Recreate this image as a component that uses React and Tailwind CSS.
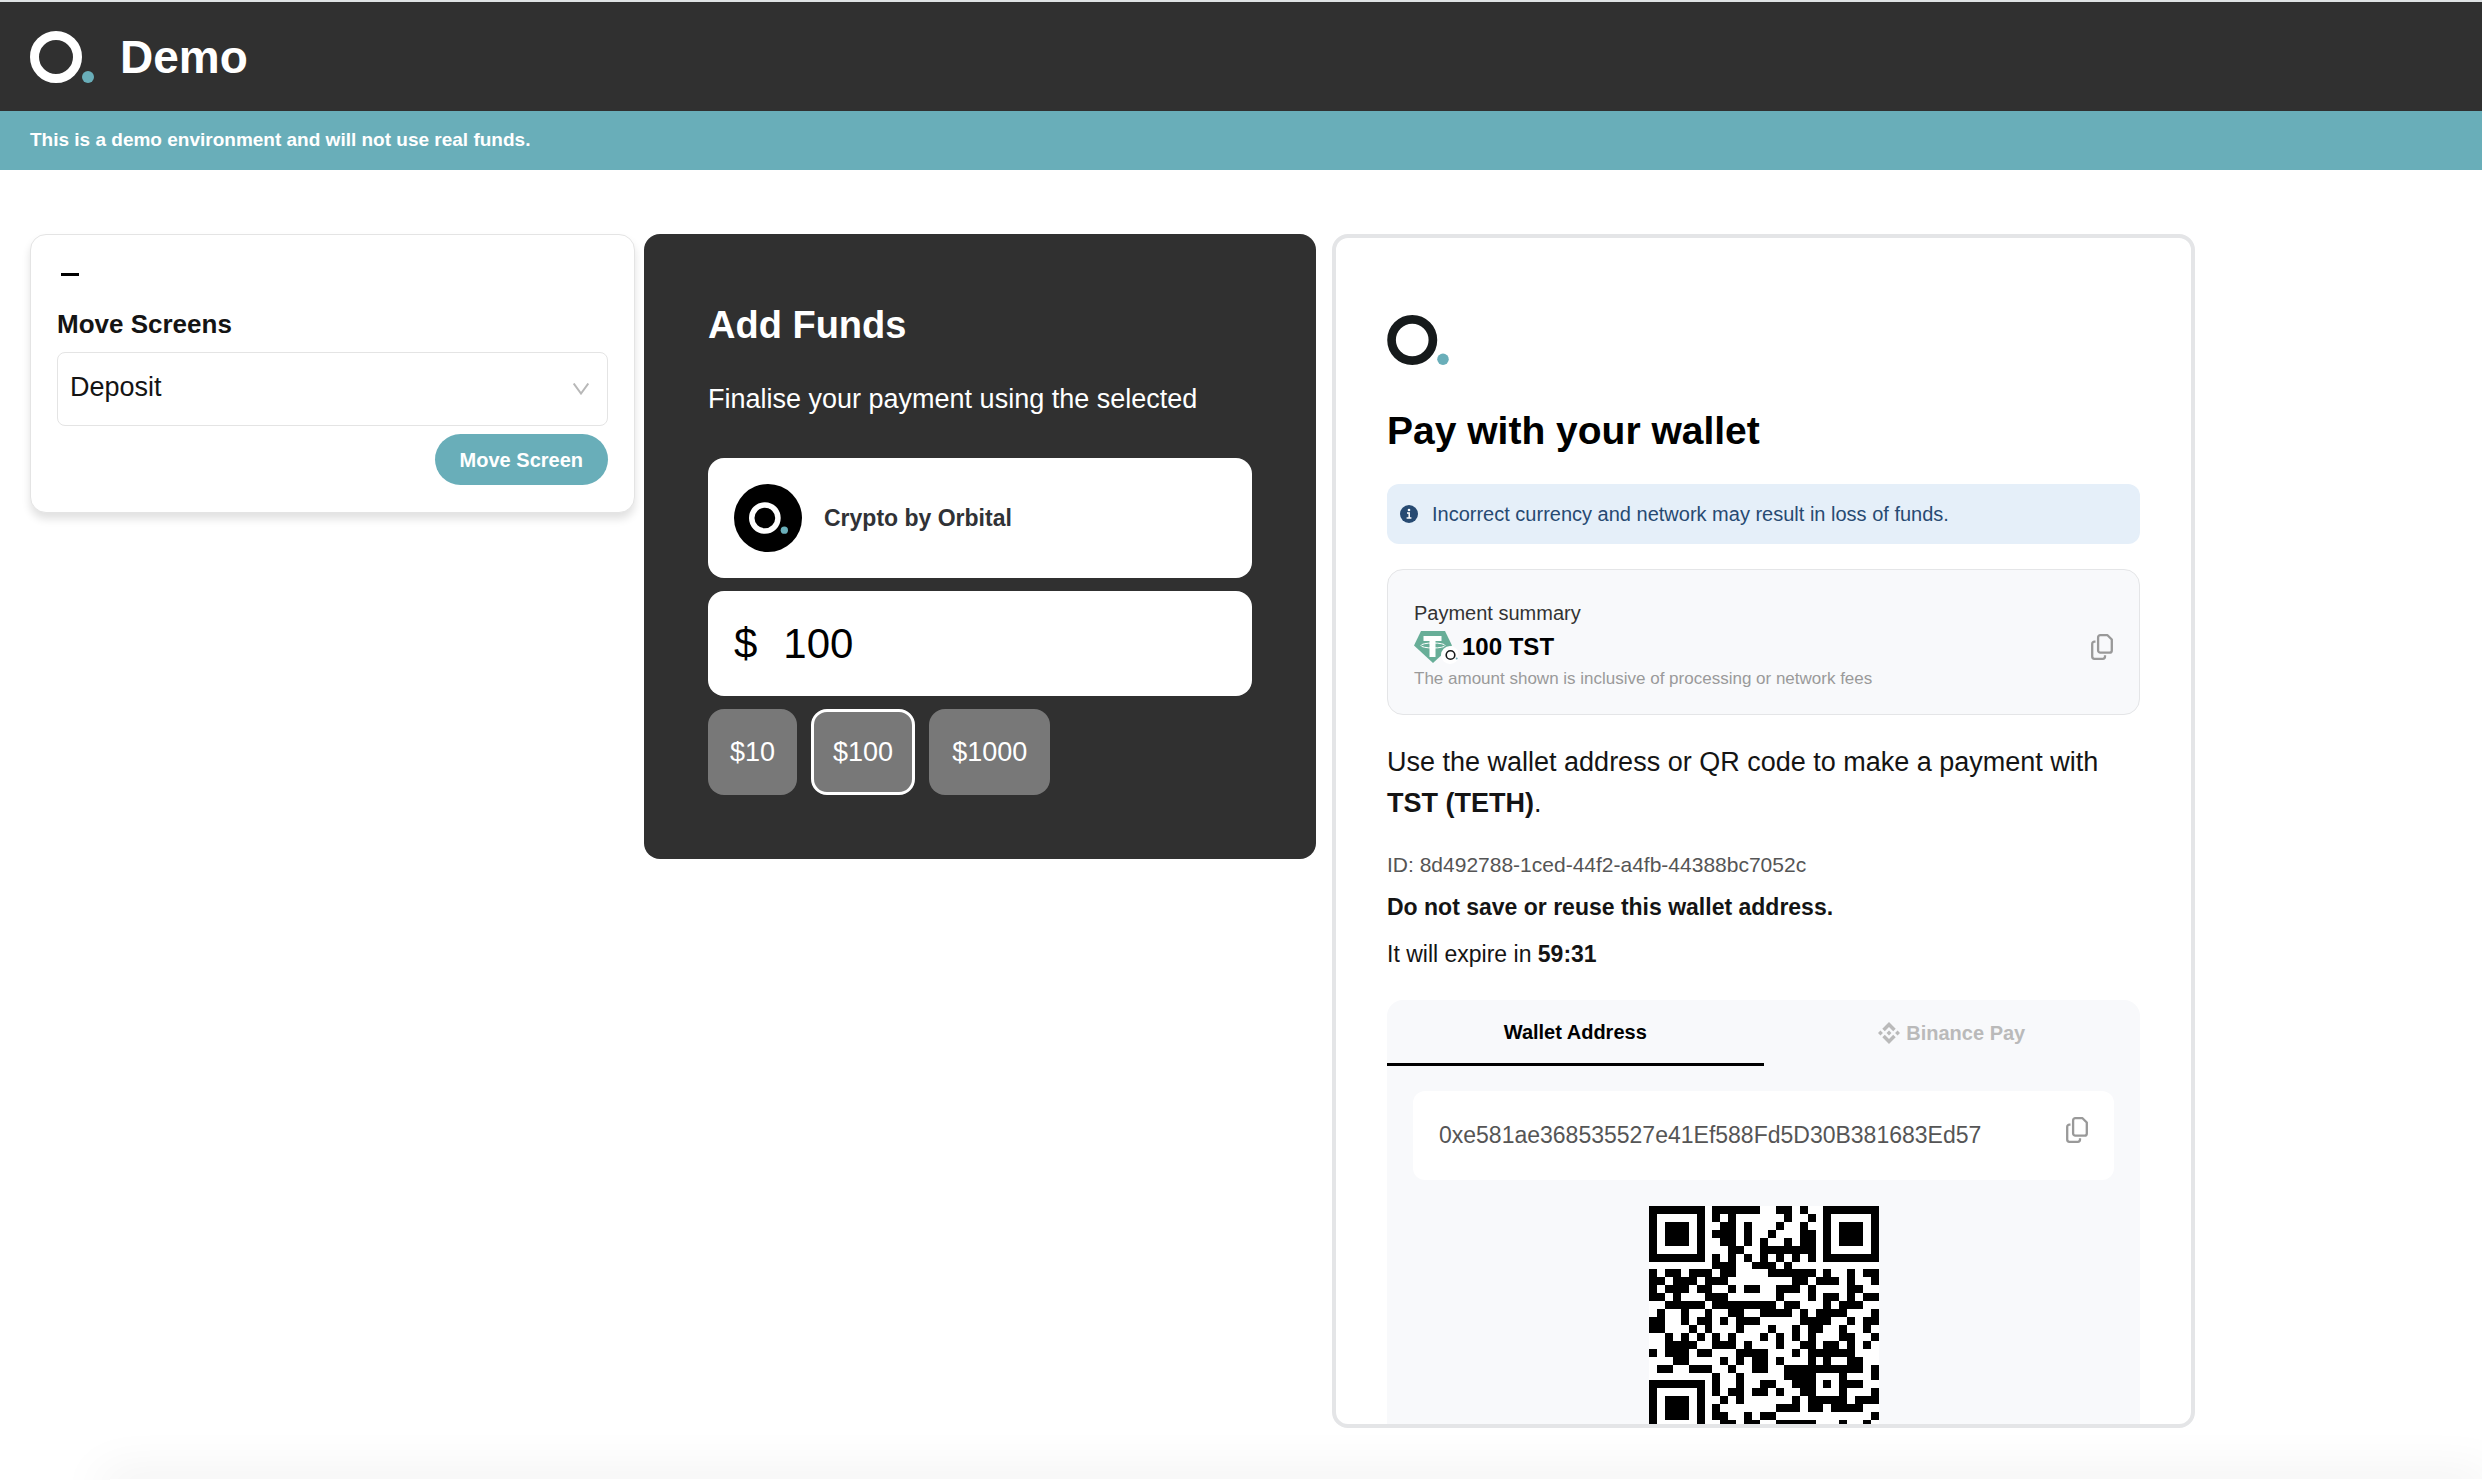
import React, { useState } from "react";

const QR_ROWS = [
  "11111110111111001101001111111",
  "10000010101000000100101000001",
  "10111010011010001001001011101",
  "10111010111010010001101011101",
  "10111010011010100101101011101",
  "10000010001100111111101000001",
  "11111110101010101010101111111",
  "00000000111001110100000000000",
  "10110111011000011111101001011",
  "11011101110000000011011101001",
  "10111011001011001110100001100",
  "11010001110000001000101101011",
  "00111110111111110110001011100",
  "01001001001100111101011110001",
  "11001011010111000001111001011",
  "11000101000100010010110010010",
  "00101010101000101010100011001",
  "00111100111010001001101101010",
  "10111011000111100010111111000",
  "00011000010101101000101001100",
  "01100111001001100111111111101",
  "00000000100100000111100010001",
  "11111110100100110011101011100",
  "10000010101101101001100010001",
  "10111010010100000010111110111",
  "10111010100000001110110111100",
  "10111010110010110000000000001",
  "10000010011011001111100010010",
  "11111110010110101011011010110",
];

const QR_PATH = QR_ROWS.map((row, y) =>
  [...row].map((c, x) => (c === "1" ? `M${x} ${y}h1v1h-1z` : "")).join("")
).join("");

function OrbitalLogo({ ring, className }) {
  return (
    <svg viewBox="0 0 64 52" className={className} aria-hidden="true">
      <circle cx="26" cy="26" r="21.500" fill="none" stroke={ring} strokeWidth="9" />
      <circle cx="58" cy="46" r="6" fill="#69aeb9" />
    </svg>
  );
}

function CopyIcon({ className }) {
  return (
    <svg viewBox="0 0 22 26" className={className} fill="none" stroke="currentColor" strokeWidth="2.300" strokeLinejoin="round" strokeLinecap="butt" aria-hidden="true">
      <path d="M9.300 1.200h7.200l4.300 4.300v11a2.200 2.200 0 0 1-2.200 2.200H9.300a2.200 2.200 0 0 1-2.200-2.200V3.400a2.200 2.200 0 0 1 2.200-2.200z" />
      <path d="M4.500 7.700H3.400a2.200 2.200 0 0 0-2.200 2.200v12.700a2.200 2.200 0 0 0 2.200 2.200h8.400a2.200 2.200 0 0 0 2.200-2.200v-1.300" />
    </svg>
  );
}

function TetherIcon() {
  return (
    <svg viewBox="0 0 44 33" className="h-[33px] w-11" aria-hidden="true">
      <path d="M7 0h24l7 14.500L19 32 0 14.500z" fill="#68ae98" />
      <path d="M9.500 5h18v5h-6v16h-6V10h-6z" fill="#fff" />
      <ellipse cx="19" cy="14.500" rx="12" ry="2.500" fill="none" stroke="#fff" strokeWidth="1" />
      <circle cx="36" cy="24" r="9" fill="#fff" />
      <circle cx="36.500" cy="24" r="4.300" fill="none" stroke="#161819" strokeWidth="1.600" />
      <circle cx="42.700" cy="27.500" r="1" fill="#69aeb9" />
    </svg>
  );
}

function BinanceIcon() {
  return (
    <svg viewBox="0 0 24 24" className="size-[22px]" fill="currentColor" aria-hidden="true">
      <path d="M12 0l7.300 7.300-2.700 2.700L12 5.400 7.400 10 4.700 7.300z" />
      <path d="M12 24l7.300-7.300-2.700-2.700-4.600 4.600L7.400 14l-2.700 2.700z" />
      <path d="M12 9.300l2.700 2.700-2.700 2.700L9.300 12zM2.700 9.300L5.400 12l-2.700 2.700L0 12zM21.300 9.300L24 12l-2.700 2.700-2.700-2.700z" />
    </svg>
  );
}

function InfoIcon() {
  return (
    <svg viewBox="0 0 18 18" className="size-[18px] shrink-0" aria-hidden="true">
      <circle cx="9" cy="9" r="9" fill="#274a72" />
      <circle cx="9" cy="5" r="1.300" fill="#fff" />
      <path d="M7 8h2.200v5M6.600 13h4.800" stroke="#fff" strokeWidth="1.500" fill="none" />
    </svg>
  );
}

function MoveScreens() {
  return (
    <section className="w-[605px] shrink-0 rounded-2xl border border-[#e4e4e4] bg-white px-[26px] pt-[21px] pb-[27px] shadow-[0_6px_8px_rgba(0,0,0,0.12)]">
      <button type="button" aria-label="Collapse" className="flex h-9 w-[26px] items-center justify-center">
        <span className="h-[3px] w-[18px] bg-black" />
      </button>
      <label htmlFor="screen" className="mt-3 block text-[26px] leading-10 font-bold text-[#141414]">Move Screens</label>
      <div className="relative mt-2">
        <select id="screen" defaultValue="Deposit" className="block h-[74px] w-full appearance-none rounded-lg border border-[#e4e4e4] bg-white px-3 pb-1 text-[27px] text-[#141414]">
          <option>Deposit</option>
          <option>Withdraw</option>
        </select>
        <svg viewBox="0 0 16 12" className="pointer-events-none absolute top-[31px] right-[19px] h-3 w-4" fill="none" stroke="#b8b8b8" strokeWidth="2" aria-hidden="true">
          <path d="M.7 .5l7.300 10 7.300-10" />
        </svg>
      </div>
      <div className="mt-2 flex justify-end">
        <button type="button" className="h-[51px] rounded-full bg-[#69aeb9] px-[25px] text-[20px] font-bold text-white">Move Screen</button>
      </div>
    </section>
  );
}

function AddFunds() {
  const [amount, setAmount] = useState("100");
  return (
    <section className="w-[672px] shrink-0 rounded-2xl bg-[#303030] px-16 pt-[65px] pb-16 text-white">
      <h2 className="text-[38px] leading-[52px] font-bold">Add Funds</h2>
      <p className="mt-7 text-[27px] leading-10">Finalise your payment using the selected</p>
      <div className="mt-[39px] flex h-[120px] items-center gap-[22px] rounded-2xl bg-white px-[26px]">
        <span className="flex size-[68px] items-center justify-center rounded-full bg-black">
          <OrbitalLogo ring="#fff" className="h-8 w-[39px]" />
        </span>
        <span className="text-[23px] font-bold text-[#303236]">Crypto by Orbital</span>
      </div>
      <label className="mt-[13px] flex h-[105px] items-center gap-[26px] rounded-2xl bg-white px-[26px] text-[42px] text-black">
        <span>$</span>
        <input aria-label="Amount" value={amount} onChange={(e) => setAmount(e.target.value)} className="min-w-0 flex-1 bg-transparent outline-none" />
      </label>
      <div className="mt-[13px] flex gap-[14px] text-[27px]">
        <button type="button" onClick={() => setAmount("10")} className="h-[86px] rounded-2xl bg-[#787878] px-[22px]">$10</button>
        <button type="button" onClick={() => setAmount("100")} className="h-[86px] rounded-2xl border-3 border-white bg-[#787878] px-[19px]">$100</button>
        <button type="button" onClick={() => setAmount("1000")} className="h-[86px] rounded-2xl bg-[#787878] px-[23px]">$1000</button>
      </div>
    </section>
  );
}

function PayWithWallet() {
  return (
    <section className="ml-[7px] h-[1194px] w-[863px] shrink-0 overflow-hidden rounded-2xl border-4 border-[#e4e5e7] bg-white px-[51px] pt-[77px] text-[#141414]">
      <OrbitalLogo ring="#161a1b" className="h-[50px] w-[62px]" />
      <h2 className="mt-10 text-[39px] leading-[52px] font-bold text-black">Pay with your wallet</h2>
      <p className="mt-[27px] flex h-[60px] items-center gap-[14px] rounded-xl bg-[#e5eff9] px-[13px] text-[20px] text-[#274a72]">
        <InfoIcon />
        Incorrect currency and network may result in loss of funds.
      </p>
      <div className="mt-[25px] flex h-[146px] items-center justify-between rounded-2xl border border-[#e4e5e7] bg-[#f8f9fb] px-[26px] pt-[6px]">
        <div>
          <p className="text-[20px] leading-8 text-[#333]">Payment summary</p>
          <p className="flex h-9 items-center gap-1 text-[24px] font-bold text-black"><TetherIcon />100 TST</p>
          <p className="text-[17px] leading-7 text-[#9a9a9a]">The amount shown is inclusive of processing or network fees</p>
        </div>
        <button type="button" aria-label="Copy amount" className="mt-1 text-[#999]"><CopyIcon className="h-[26px] w-[22px]" /></button>
      </div>
      <p className="mt-[27px] text-[27px] leading-[41px]">Use the wallet address or QR code to make a payment with <b>TST (TETH)</b>.</p>
      <p className="mt-[25px] text-[21px] leading-8 text-[#555]">ID: 8d492788-1ced-44f2-a4fb-44388bc7052c</p>
      <p className="mt-2 text-[23px] leading-9 font-bold">Do not save or reuse this wallet address.</p>
      <p className="mt-[11px] text-[23px] leading-9">It will expire in <b>59:31</b></p>
      <div className="mt-7 rounded-t-2xl bg-[#f8f9fb] text-[20px] font-bold">
        <div role="tablist" className="grid grid-cols-2">
          <button type="button" role="tab" aria-selected="true" className="h-[66px] border-b-3 border-black text-black">Wallet Address</button>
          <button type="button" role="tab" aria-selected="false" className="flex h-[66px] items-center justify-center gap-[6px] text-[#bababa]"><BinanceIcon />Binance Pay</button>
        </div>
        <div className="px-[26px] pt-[25px] pb-6">
          <div className="flex h-[89px] items-center justify-between rounded-xl bg-white px-[26px] text-[23px] font-normal text-[#555]">
            <span>0xe581ae368535527e41Ef588Fd5D30B381683Ed57</span>
            <button type="button" aria-label="Copy wallet address" className="mb-3 text-[#999]"><CopyIcon className="h-[26px] w-[22px]" /></button>
          </div>
          <svg viewBox="0 0 29 29" className="mx-auto mt-[26px] size-[230px] bg-white" role="img" aria-label="Wallet address QR code">
            <path d={QR_PATH} fill="#000" shapeRendering="crispEdges" />
          </svg>
        </div>
      </div>
    </section>
  );
}

export default function App() {
  return (
    <div className="flex min-h-screen flex-col overflow-hidden bg-white font-['Liberation_Sans',Arial,sans-serif]">
      <header className="flex h-[111px] items-center gap-[26px] border-t-2 border-[#dfe2e4] bg-[#303030] px-[30px] text-white">
        <OrbitalLogo ring="#fff" className="h-[52px] w-16" />
        <h1 className="pt-0.5 text-[46px] font-bold">Demo</h1>
      </header>
      <p className="flex h-[59px] items-center bg-[#69aeb9] px-[30px] text-[19px] font-bold text-white">This is a demo environment and will not use real funds.</p>
      <main className="flex flex-1 items-start gap-[9px] px-[30px] pt-16">
        <MoveScreens />
        <AddFunds />
        <PayWithWallet />
      </main>
      <div className="ml-[110px] h-px shadow-[0_8px_50px_8px_rgba(0,0,0,0.12)]" />
    </div>
  );
}
